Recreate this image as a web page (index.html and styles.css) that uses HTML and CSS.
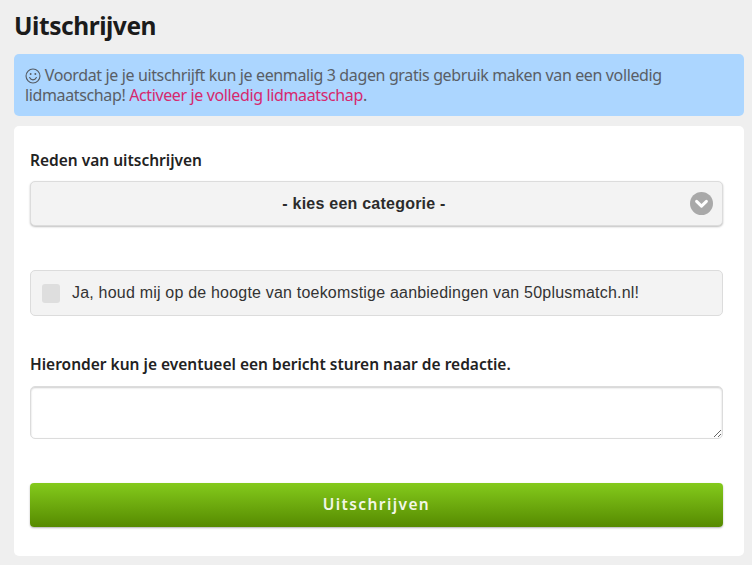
FILE: index.html
```html
<!DOCTYPE html>
<html lang="nl">
<head>
<meta charset="utf-8">
<title>Uitschrijven</title>
<link rel="stylesheet" href="styles.css">
</head>
<body>
<main class="page">
  <h1 class="title">Uitschrijven</h1>
  <p class="alert"><svg class="smiley" width="16" height="16" viewBox="0 0 17 17" fill="none" stroke="#555b63" stroke-width="1.2"><circle cx="8.5" cy="8.5" r="7.4"/><path d="M4.9 10.2c.8 1.6 2.1 2.4 3.6 2.4s2.8-.8 3.6-2.4" stroke-linecap="round"/><circle cx="6" cy="6.4" r="1" fill="#555b63" stroke="none"/><circle cx="11" cy="6.4" r="1" fill="#555b63" stroke="none"/></svg> Voordat je je uitschrijft kun je eenmalig 3 dagen gratis gebruik maken van een volledig lidmaatschap! <a class="alert-link" href="#">Activeer je volledig lidmaatschap</a>.</p>
  <form class="card">
    <label class="label label-first" for="reden">Reden van uitschrijven</label>
    <div class="select" id="reden">
      <span>- kies een categorie -</span>
      <svg class="chevron" width="23" height="23" viewBox="0 0 23 23"><circle cx="11.5" cy="11.5" r="11.5" fill="#a9a9a9"/><path d="M6.6 9.4l4.9 4.7 4.9-4.7" fill="none" stroke="#fff" stroke-width="3" stroke-linecap="round" stroke-linejoin="round"/></svg>
    </div>
    <div class="check-row">
      <span class="checkbox"></span>
      <span>Ja, houd mij op de hoogte van toekomstige aanbiedingen van 50plusmatch.nl!</span>
    </div>
    <label class="label label-second" for="bericht">Hieronder kun je eventueel een bericht sturen naar de redactie.</label>
    <textarea class="message" id="bericht"></textarea>
    <button class="submit" type="button">Uitschrijven</button>
  </form>
</main>
</body>
</html>
```

FILE: styles.css
```css
* {
  box-sizing: border-box;
}

html,
body {
  margin: 0;
  height: 565px;
  overflow: hidden;
  background: #efefef;
}

.page {
  padding: 0 8px 0 14px;
  font-family: "Noto Sans", sans-serif;
}

.title {
  margin: 0;
  padding-top: 9px;
  height: 54px;
  font-size: 24.5px;
  line-height: 34px;
  font-weight: 700;
  letter-spacing: -0.45px;
  color: #1b1b1b;
}

.alert {
  margin: 0 0 10px;
  height: 62px;
  padding: 11px 11px 0;
  background: #acd6ff;
  border-radius: 5px;
  font-size: 16px;
  line-height: 20px;
  letter-spacing: -0.37px;
  color: #595e66;
}

.smiley {
  vertical-align: -3px;
}

.alert-link {
  color: #d6286e;
  text-decoration: none;
}

.card {
  display: flex;
  flex-direction: column;
  height: 430px;
  padding: 0 21px 0 16px;
  background: #fff;
  border-radius: 5px;
}

.label {
  display: block;
  font-size: 15.5px;
  line-height: 20px;
  font-weight: 600;
  color: #222;
}

.label-first {
  margin-top: 24px;
}

.label-second {
  margin-top: 38px;
}

.select {
  display: flex;
  align-items: center;
  justify-content: center;
  position: relative;
  height: 45px;
  margin-top: 11px;
  padding-right: 25px;
  background: #f3f3f3;
  border: 1px solid #dcdcdc;
  border-radius: 5px;
  box-shadow: 0 1px 2px rgba(0, 0, 0, 0.25);
  font-family: "Liberation Sans", sans-serif;
  font-size: 16px;
  font-weight: 700;
  letter-spacing: 0.23px;
  color: #2b2b2b;
}

.chevron {
  position: absolute;
  right: 9px;
  top: 10px;
}

.check-row {
  display: flex;
  align-items: center;
  gap: 12px;
  height: 46px;
  margin-top: 44px;
  padding-left: 11px;
  background: #f3f3f3;
  border: 1px solid #dcdcdc;
  border-radius: 5px;
  font-family: "Liberation Sans", sans-serif;
  font-size: 16px;
  letter-spacing: 0.2px;
  color: #333;
}

.checkbox {
  width: 18px;
  height: 19px;
  background: #dedede;
  border-radius: 3px;
}

.message {
  display: block;
  height: 53px;
  margin-top: 12px;
  background: #fff;
  border: 1px solid #dcdcdc;
  border-radius: 5px;
  box-shadow: inset 0 1px 2px rgba(0, 0, 0, 0.2);
}

.submit {
  height: 44px;
  margin-top: 44px;
  padding-bottom: 3px;
  background: linear-gradient(#84ca1c, #568a00);
  border: 0;
  border-radius: 4px;
  box-shadow: 0 1px 2px rgba(0, 0, 0, 0.3);
  font-family: "Noto Sans", sans-serif;
  font-size: 15.5px;
  font-weight: 600;
  letter-spacing: 1.4px;
  color: #f3f7e8;
}
```
